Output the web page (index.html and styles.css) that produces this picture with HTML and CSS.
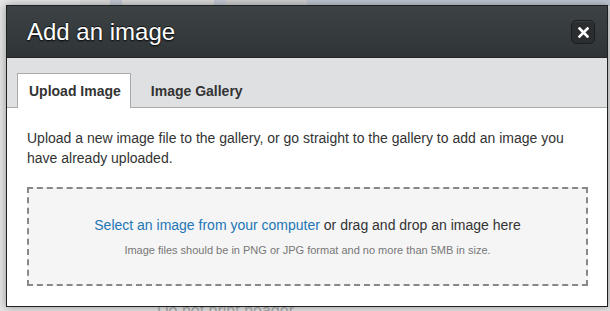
FILE: index.html
```html
<!DOCTYPE html>
<html lang="en">
<head>
<meta charset="utf-8">
<title>Add an image</title>
<link rel="stylesheet" href="styles.css">
</head>
<body>
<div class="backdrop">
  <div class="topstrip">
    <span class="seg s1"></span><span class="seg s2"></span><span class="seg s3"></span><span class="seg s4"></span><span class="seg s3"></span><span class="seg s5"></span><span class="seg s6"></span>
  </div>
  <div class="behind-text">Do not print header</div>
</div>

<div class="modal">
  <div class="modal-header">
    <h1 class="modal-title">Add an image</h1>
    <button class="close-btn" aria-label="Close">
      <svg width="11" height="11" viewBox="0 0 11 11"><path d="M1.5 1.5 L9.5 9.5 M9.5 1.5 L1.5 9.5" stroke="#fff" stroke-width="2.6" stroke-linecap="square" fill="none"/></svg>
    </button>
  </div>
  <div class="tabs">
    <div class="tab active">Upload Image</div>
    <div class="tab">Image Gallery</div>
  </div>
  <div class="modal-body">
    <p class="intro">Upload a new image file to the gallery, or go straight to the gallery to add an image you have already uploaded.</p>
    <div class="dropzone">
      <div class="drop-main"><a class="drop-link" href="#">Select an image from your computer</a> or drag and drop an image here</div>
      <div class="drop-note">Image files should be in PNG or JPG format and no more than 5MB in size.</div>
    </div>
  </div>
</div>
</body>
</html>
```

FILE: styles.css
```css
html, body {
  margin: 0;
  padding: 0;
}
body {
  width: 610px;
  height: 311px;
  overflow: hidden;
  background: #e3e3e3;
  font-family: "Liberation Sans", Arial, sans-serif;
  position: relative;
}
.backdrop {
  height: 311px;
  display: flex;
  flex-direction: column;
  justify-content: space-between;
}
.topstrip {
  display: flex;
  height: 6px;
}
.seg { display: block; height: 100%; }
.s1 { width: 80px; background: #e6e6e6; }
.s2 { width: 30px; background: #dcdcdc; }
.s3 { width: 12px; background: #c3cad3; }
.s4 { width: 92px; background: #dadada; }
.s5 { width: 81px; background: #cfcfcf; }
.s6 { flex: 1; background: #bec6d0; }

.behind-text {
  margin-left: 157px;
  margin-bottom: -10px;
  font-size: 16px;
  color: #a8a8a8;
  line-height: 20px;
}

.modal {
  position: absolute;
  left: 6px;
  top: 5px;
  width: 602px;
  height: 302px;
  box-sizing: border-box;
  border: 1px solid #1e2122;
  background: #fff;
  box-shadow: 0 0 8px rgba(0,0,0,0.35);
  display: flex;
  flex-direction: column;
}
.modal-header {
  height: 52px;
  display: flex;
  align-items: center;
  justify-content: space-between;
  padding: 0 12px 0 20px;
  background: linear-gradient(#3d4345, #2f3436);
  border-bottom: 1px solid #222627;
  box-sizing: border-box;
}
.modal-title {
  margin: 0;
  font-size: 24px;
  font-weight: normal;
  color: #fff;
  line-height: 52px;
  text-shadow: 0 1px 2px #000, 0 -1px 0 rgba(0,0,0,0.6);
}
.close-btn {
  width: 24px;
  height: 24px;
  padding: 0;
  margin-top: 1px;
  border: 1px solid #1b1e1f;
  border-radius: 5px;
  background: #2a2e30;
  box-shadow: inset 0 1px 0 rgba(255,255,255,0.08);
  display: flex;
  align-items: center;
  justify-content: center;
}
.tabs {
  height: 50px;
  box-sizing: border-box;
  background: #dfe0e2;
  border-bottom: 1px solid #aaaaaa;
  padding: 16px 0 0 10px;
  display: flex;
  gap: 8px;
  align-items: flex-end;
}
.tab {
  height: 34px;
  box-sizing: border-box;
  padding: 0 9px 0 11px;
  font-size: 14px;
  font-weight: bold;
  color: #333;
  line-height: 34px;
  border: 1px solid transparent;
  border-bottom: none;
}
.tab.active {
  background: #fff;
  border-color: #aaaaaa;
  height: 35px;
  margin-bottom: -1px;
}
.modal-body {
  flex: 1;
  padding: 20px 19px 0 20px;
}
.intro {
  margin: 0 0 19px 0;
  font-size: 14px;
  line-height: 20px;
  color: #333;
}
.dropzone {
  height: 99px;
  box-sizing: border-box;
  border: 2px dashed #888;
  background: #f5f5f5;
  padding-top: 26px;
  text-align: center;
}
.drop-main {
  font-size: 14px;
  line-height: 20px;
  color: #333;
}
.drop-link {
  color: #2275b6;
  text-decoration: none;
}
.drop-note {
  margin-top: 7px;
  font-size: 11px;
  line-height: 16px;
  color: #777;
}
```
